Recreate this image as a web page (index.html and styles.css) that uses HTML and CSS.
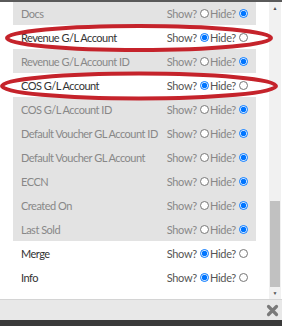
FILE: index.html
```html
<!DOCTYPE html>
<html lang="en">
<head>
  <meta charset="UTF-8">
  <title>Columns</title>
  <link rel="stylesheet" href="styles.css">
</head>
<body>

  <div class="dialog">
    <div class="top-bar"></div>

    <div class="body">
      <div class="viewport">
        <div class="list">
          <div class="row hidden"><span class="label">Docs</span><span class="opts">Show?<input type="radio" name="r1">Hide?<input type="radio" name="r1" checked></span></div>
          <div class="row"><span class="label">Revenue G/L Account</span><span class="opts">Show?<input type="radio" name="r2" checked>Hide?<input type="radio" name="r2"></span></div>
          <div class="row hidden"><span class="label">Revenue G/L Account ID</span><span class="opts">Show?<input type="radio" name="r3">Hide?<input type="radio" name="r3" checked></span></div>
          <div class="row"><span class="label">COS G/L Account</span><span class="opts">Show?<input type="radio" name="r4" checked>Hide?<input type="radio" name="r4"></span></div>
          <div class="row hidden"><span class="label">COS G/L Account ID</span><span class="opts">Show?<input type="radio" name="r5">Hide?<input type="radio" name="r5" checked></span></div>
          <div class="row hidden"><span class="label">Default Voucher GL Account ID</span><span class="opts">Show?<input type="radio" name="r6">Hide?<input type="radio" name="r6" checked></span></div>
          <div class="row hidden"><span class="label">Default Voucher GL Account</span><span class="opts">Show?<input type="radio" name="r7">Hide?<input type="radio" name="r7" checked></span></div>
          <div class="row hidden"><span class="label">ECCN</span><span class="opts">Show?<input type="radio" name="r8">Hide?<input type="radio" name="r8" checked></span></div>
          <div class="row hidden"><span class="label">Created On</span><span class="opts">Show?<input type="radio" name="r9">Hide?<input type="radio" name="r9" checked></span></div>
          <div class="row hidden"><span class="label">Last Sold</span><span class="opts">Show?<input type="radio" name="r10">Hide?<input type="radio" name="r10" checked></span></div>
          <div class="row"><span class="label">Merge</span><span class="opts">Show?<input type="radio" name="r11" checked>Hide?<input type="radio" name="r11"></span></div>
          <div class="row"><span class="label">Info</span><span class="opts">Show?<input type="radio" name="r12" checked>Hide?<input type="radio" name="r12"></span></div>
        </div>
      </div>

      <div class="scrollbar">
        <span class="arrow">&#9650;</span>
        <div class="track"><div class="thumb"></div></div>
        <span class="arrow">&#9660;</span>
      </div>

      <!-- hand drawn marks on top of the list -->
      <svg class="marks" width="282" height="120" viewBox="0 0 282 120">
        <ellipse cx="139" cy="36" rx="132" ry="12" fill="none" stroke="#c5232b" stroke-width="4"/>
        <ellipse cx="139" cy="84" rx="137" ry="12.5" fill="none" stroke="#c5232b" stroke-width="4"/>
      </svg>
    </div>

    <div class="footer">
      <svg class="close" width="13" height="13" viewBox="0 0 13 13">
        <path d="M2.5 2.5 L10.5 10.5 M10.5 2.5 L2.5 10.5" stroke="#7a7a7a" stroke-width="3.2" stroke-linecap="round"/>
      </svg>
    </div>
    <div class="bottom-bar"></div>
  </div>

</body>
</html>
```

FILE: styles.css
```css
body {
  margin: 0;
  font-family: Lato, "Liberation Sans", sans-serif;
  background: #fff;
}

.dialog {
  width: 282px;
  height: 326px;
  display: flex;
  flex-direction: column;
}

.top-bar {
  height: 2px;
  background-color: #5a5a5a;
}

.body {
  position: relative;
  height: 297px;
  display: flex;
}

.viewport {
  flex: 1;
  overflow: hidden;
  padding-top: 1px;
}

.list {
  margin: -2px 0 0 13px;
  width: 243px;
}

.row {
  height: 24px;
  display: flex;
  align-items: center;
  padding: 0 7px 0 8px;
  font-size: 11px;
  color: #333;
  white-space: nowrap;
}

.row.hidden {
  background-color: #e3e3e3;
  color: #888;
}

.label {
  flex: 1;
  min-width: 0;
  overflow: hidden;
  letter-spacing: -0.5px;
}

.opts {
  flex-shrink: 0;
  display: flex;
  align-items: center;
  color: #555;
  letter-spacing: -0.3px;
}

.row.hidden .opts {
  color: #888;
}

.opts input {
  width: 9px;
  height: 9px;
  margin: 0 1px 0 3px;
}

.scrollbar {
  width: 12px;
  margin-right: 1px;
  display: flex;
  flex-direction: column;
  background-color: #f1f1f1;
}

.arrow {
  height: 12px;
  font-size: 5px;
  color: #505050;
  display: flex;
  align-items: center;
  justify-content: center;
}

.track {
  flex: 1;
  display: flex;
  flex-direction: column;
  justify-content: flex-end;
  padding: 0 1px;
}

.thumb {
  height: 86px;
  background-color: #c1c1c1;
}

.marks {
  position: absolute;
  left: 0;
  top: 0;
  pointer-events: none;
}

.footer {
  flex: 1;
  border-top: 1px solid #d4d4d4;
  background-color: #e8e8e8;
  display: flex;
  align-items: center;
  justify-content: flex-end;
  padding-right: 3px;
}

.bottom-bar {
  height: 6px;
  background-color: #3a3a3a;
}
```
